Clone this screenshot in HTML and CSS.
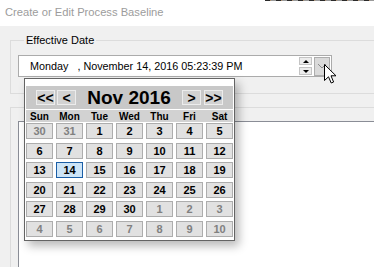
FILE: index.html
```html
<!DOCTYPE html>
<html lang="en">
<head>
    <meta charset="UTF-8">
    <title>Create or Edit Process Baseline</title>
    <link rel="stylesheet" href="styles.css">
</head>
<body>
    <div class="titlebar">Create or Edit Process Baseline</div>

    <fieldset class="group">
        <legend>Effective Date</legend>
        <div class="date-field">
            <span class="date-text">Monday   , November 14, 2016 05:23:39 PM</span>
            <div class="spin">
                <button class="spin-btn"><span class="tri-up"></span></button>
                <button class="spin-btn"><span class="tri-down"></span></button>
            </div>
            <button class="drop-btn">
                <svg width="10" height="6" viewBox="0 0 10 6"><path d="M1 1 L5 5 L9 1" fill="none" stroke="#8a8a8a" stroke-width="1"/></svg>
            </button>
        </div>
    </fieldset>

    <fieldset class="group group-second">
        <legend>Comments</legend>
        <div class="panel"></div>
    </fieldset>

    <!-- dropdown calendar, open over the form -->
    <div class="calendar">
        <div class="cal-head">
            <div class="nav">
                <button class="nav-btn">&lt;&lt;</button>
                <button class="nav-btn">&lt;</button>
            </div>
            <div class="cal-title">Nov 2016</div>
            <div class="nav nav-right">
                <button class="nav-btn">&gt;</button>
                <button class="nav-btn">&gt;&gt;</button>
            </div>
        </div>
        <div class="day-names">
            <span>Sun</span><span>Mon</span><span>Tue</span><span>Wed</span><span>Thu</span><span>Fri</span><span>Sat</span>
        </div>
        <div class="days">
            <div class="day other">30</div><div class="day other">31</div><div class="day">1</div><div class="day">2</div><div class="day">3</div><div class="day">4</div><div class="day">5</div>
            <div class="day">6</div><div class="day">7</div><div class="day">8</div><div class="day">9</div><div class="day">10</div><div class="day">11</div><div class="day">12</div>
            <div class="day">13</div><div class="day today">14</div><div class="day">15</div><div class="day">16</div><div class="day">17</div><div class="day">18</div><div class="day">19</div>
            <div class="day">20</div><div class="day">21</div><div class="day">22</div><div class="day">23</div><div class="day">24</div><div class="day">25</div><div class="day">26</div>
            <div class="day">27</div><div class="day">28</div><div class="day">29</div><div class="day">30</div><div class="day other">1</div><div class="day other">2</div><div class="day other">3</div>
            <div class="day other">4</div><div class="day other">5</div><div class="day other">6</div><div class="day other">7</div><div class="day other">8</div><div class="day other">9</div><div class="day other">10</div>
        </div>
    </div>

    <svg class="cursor" width="13" height="20" viewBox="0 0 13 20">
        <path d="M0.5 0.5 L0.5 16.5 L4.5 12.8 L7.2 19 L9.6 18 L7 11.8 L12 11.8 Z" fill="#fff" stroke="#000" stroke-width="1"/>
    </svg>
</body>
</html>
```

FILE: styles.css
```css
html, body {
    margin: 0;
    padding: 0;
}
body {
    width: 374px;
    height: 267px;
    overflow: hidden;
    position: relative;
    background-color: #f0f0f0;
    font-family: "Liberation Sans", Arial, sans-serif;
    font-size: 11px;
    color: #000;
}
button {
    font-family: inherit;
    padding: 0;
    margin: 0;
}
.titlebar {
    height: 26px;
    line-height: 25px;
    padding-left: 5px;
    background-color: #fff;
    background-image: repeating-linear-gradient(90deg, #2b2b2b 0 5px, #b09070 5px 6px, #9a9a9a 6px 11px);
    background-size: 109px 1px;
    background-position: right top;
    background-repeat: no-repeat;
    color: #9c9c9c;
    font-size: 11.2px;
}
.group {
    margin: 8px -20px 0 10px;
    padding: 0 0 16px 7px;
    border: 1px solid #dcdcdc;
}
.group legend {
    margin-left: 6px;
    padding: 0 2px;
    line-height: 13px;
    font-size: 11px;
}
.date-field {
    margin-top: 8px;
    width: 312px;
    height: 20px;
    border: 1px solid #ababab;
    background-color: #fff;
    display: flex;
    align-items: center;
}
.date-text {
    flex: 1;
    padding-left: 11px;
    white-space: pre;
    font-size: 10.8px;
}
.spin {
    display: flex;
    flex-direction: column;
    gap: 2px;
    margin-right: 2px;
}
.spin-btn {
    width: 13px;
    height: 8px;
    border: 1px solid #c4c4c4;
    background-color: #ececec;
    display: flex;
    align-items: center;
    justify-content: center;
}
.tri-up {
    border-left: 3px solid transparent;
    border-right: 3px solid transparent;
    border-bottom: 3px solid #000;
}
.tri-down {
    border-left: 3px solid transparent;
    border-right: 3px solid transparent;
    border-top: 3px solid #000;
}
.drop-btn {
    width: 16px;
    height: 19px;
    margin-right: 1px;
    border: 1px solid #adadad;
    background-color: #dadada;
    display: flex;
    align-items: center;
    justify-content: center;
}
.group-second {
    margin-top: 7px;
    padding-bottom: 0;
}
.panel {
    margin-top: 7px;
    height: 200px;
    background-color: #fff;
    border-top: 1px solid #8a8d96;
    border-left: 1px solid #8a8d96;
}

.calendar {
    position: absolute;
    left: 24px;
    top: 78px;
    width: 207px;
    padding: 7px 1px 3px 1px;
    background-color: #fff;
    border: 1px solid #646464;
    box-shadow: 4px 5px 9px rgba(0, 0, 0, 0.28);
}
.cal-head {
    height: 23px;
    background-color: #c8c8c8;
    display: flex;
    align-items: center;
    padding: 0 10px;
}
.nav {
    display: flex;
    gap: 2px;
}
.nav-right {
    gap: 3px;
}
.nav-btn {
    width: 19px;
    height: 15px;
    border: 1px solid #ececec;
    background-color: #d2d2d2;
    font-weight: bold;
    font-size: 14px;
    line-height: 12px;
    color: #000;
}
.cal-title {
    flex: 1;
    text-align: center;
    font-weight: bold;
    font-size: 19px;
    line-height: 23px;
}
.day-names {
    margin-top: 1px;
    height: 12px;
    background-color: #d2d2d2;
    display: grid;
    grid-template-columns: repeat(7, 27px);
    column-gap: 3px;
    font-size: 10px;
    font-weight: bold;
    line-height: 13px;
    text-align: center;
}
.days {
    margin-top: 1px;
    display: grid;
    grid-template-columns: repeat(7, 27px);
    grid-auto-rows: 16px;
    column-gap: 3px;
    row-gap: 3.5px;
}
.day {
    border: 1px solid #adadad;
    background-color: #e1e1e1;
    font-weight: bold;
    font-size: 11px;
    line-height: 14px;
    text-align: center;
}
.day.other {
    color: #808080;
}
.day.today {
    background-color: #cce4f7;
    border-color: #1b5ea6;
}
.cursor {
    position: absolute;
    left: 324px;
    top: 64px;
}
```
